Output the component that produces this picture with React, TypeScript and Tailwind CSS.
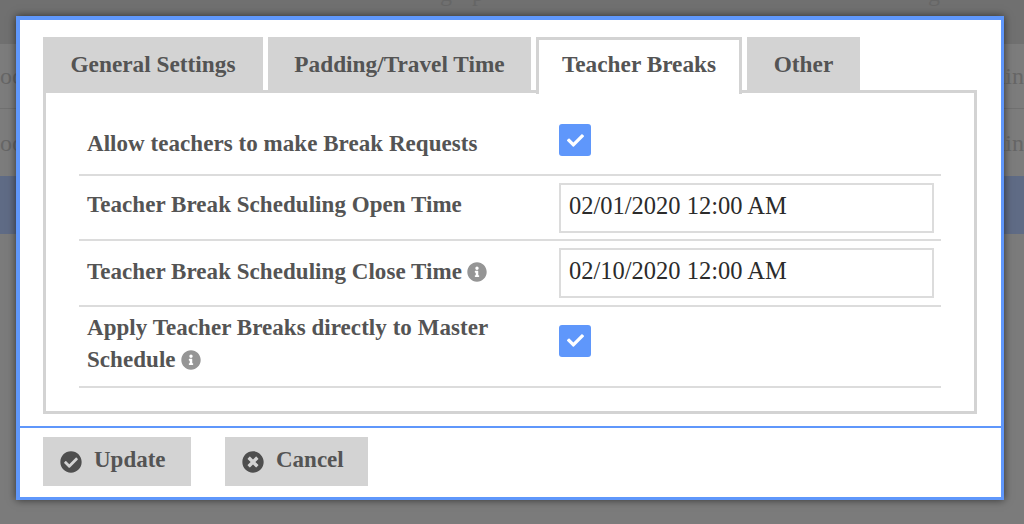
import { FaCheck, FaCheckCircle, FaTimesCircle, FaInfoCircle } from "react-icons/fa";

const label = "font-['Liberation_Serif',serif] font-bold text-[23px] tracking-[0.05px] leading-[32px] text-[#545454]";

function Tab({ text, active, className }: { text: string; active?: boolean; className: string }) {
  return (
    <div
      className={`flex items-start justify-center font-['Liberation_Serif',serif] font-bold text-[23.3px] leading-[34px] text-[#545454] ${
        active
          ? "relative z-10 h-[57px] pt-[7px] bg-white border-[3px] border-b-0 border-[#d3d3d3]"
          : "h-[53px] pt-[10px] bg-[#d3d3d3]"
      } ${className}`}
    >
      {text}
    </div>
  );
}

function Check({ className }: { className: string }) {
  return (
    <div className={`flex h-[32px] w-[32px] items-center justify-center rounded-[3px] bg-[#5f97fb] ${className}`}>
      <FaCheck className="text-white" size={17} />
    </div>
  );
}

function DateInput({ value }: { value: string }) {
  return (
    <div className="flex h-[50px] w-[375px] items-center border-[2px] border-[#dcdcdc] pl-[8px] pb-[3px] font-['Liberation_Serif',serif] text-[24.5px] text-[#2b2b2b]">
      {value}
    </div>
  );
}

function Info() {
  return <FaInfoCircle className="inline-block ml-[5px] mb-[3px] text-[#959595]" size={20} />;
}

export default function App() {
  return (
    <div className="relative h-[524px] w-[1024px] overflow-hidden bg-[#7b7b7b] font-['Liberation_Serif',serif]">
      <div className="flex h-[524px] flex-col text-[#666666] text-[24px] leading-[24px]">
        <div className="h-[44px] overflow-hidden bg-[#707070]">
          <div className="-mt-[19px] flex pl-[440px]">
            <span>g</span>
            <span className="ml-[20px]">p</span>
            <span className="ml-[444px]">g</span>
          </div>
        </div>
        <div className="flex h-[65px] items-center justify-between border-b border-[#707070] bg-[#7c7c7c]">
          <span>oo</span>
          <span>hin</span>
        </div>
        <div className="flex h-[67px] items-center justify-between bg-[#7c7c7c]">
          <span>oo</span>
          <span>hin</span>
        </div>
        <div className="h-[58px] bg-[#5f6b85]" />
      </div>

      <div className="absolute left-[16px] top-[16px] flex h-[484px] w-[988px] flex-col border-t-[4px] border-l-[4px] border-r-[3px] border-b-[3px] border-[#5f97fb] bg-white shadow-[0_0_8px_rgba(0,0,0,0.6)]">
        <div className="flex-1 px-[23px] pt-[17px]">
          <div className="flex h-[53px] items-start gap-[5px]">
            <Tab text="General Settings" className="w-[220px]" />
            <Tab text="Padding/Travel Time" className="w-[263px]" />
            <Tab text="Teacher Breaks" active className="w-[206px]" />
            <Tab text="Other" className="w-[113px]" />
          </div>
          <div className="h-[324px] w-[934px] border-[3px] border-[#d3d3d3] px-[33px] pt-[17px]">
            <div className="flex h-[66px] items-center border-b-[2px] border-[#dcdcdc]">
              <div className={`w-[480px] pl-[8px] mt-[3px] ${label}`}>Allow teachers to make Break Requests</div>
              <Check className="mb-[4px]" />
            </div>
            <div className="flex h-[65px] items-center border-b-[2px] border-[#dcdcdc]">
              <div className={`w-[480px] pl-[8px] -mt-[5px] ${label}`}>Teacher Break Scheduling Open Time</div>
              <DateInput value="02/01/2020 12:00 AM" />
            </div>
            <div className="flex h-[66px] items-center border-b-[2px] border-[#dcdcdc]">
              <div className={`w-[480px] pl-[8px] -mt-[3px] ${label}`}>
                Teacher Break Scheduling Close Time
                <Info />
              </div>
              <DateInput value="02/10/2020 12:00 AM" />
            </div>
            <div className="flex h-[81px] items-center border-b-[2px] border-[#dcdcdc]">
              <div className={`w-[480px] pl-[8px] pr-[60px] -mt-[5px] ${label}`}>
                Apply Teacher Breaks directly to Master Schedule
                <Info />
              </div>
              <Check className="mb-[12px]" />
            </div>
          </div>
        </div>
        <div className="flex h-[71px] items-start gap-[34px] border-t-[2px] border-[#5f97fb] px-[23px] pt-[9px]">
          <div className="flex h-[49px] w-[148px] items-center gap-[12px] bg-[#d3d3d3] pl-[17px] text-[23px] font-bold text-[#545454]">
            <FaCheckCircle className="mt-[1px] text-[#4e4e4e]" size={22} />
            <span className="-mt-[3px]">Update</span>
          </div>
          <div className="flex h-[49px] w-[143px] items-center gap-[12px] bg-[#d3d3d3] pl-[17px] text-[23px] font-bold text-[#545454]">
            <FaTimesCircle className="mt-[1px] text-[#4e4e4e]" size={22} />
            <span className="-mt-[3px]">Cancel</span>
          </div>
        </div>
      </div>
    </div>
  );
}
